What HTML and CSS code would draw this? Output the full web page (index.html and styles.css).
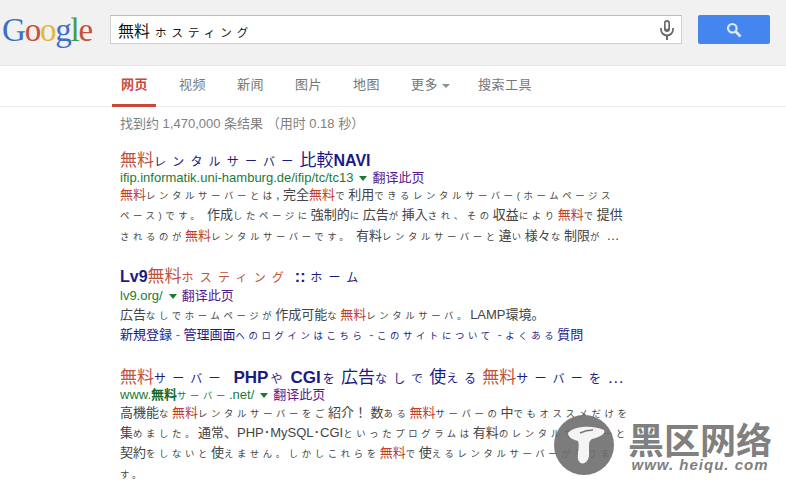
FILE: index.html
```html
<!DOCTYPE html>
<html lang="ja">
<head>
    <meta charset="UTF-8">
    <meta name="viewport" content="width=device-width, initial-scale=1.0">
    <title>無料ホスティング</title>
    <link rel="stylesheet" href="styles.css">
</head>
<body>
    <header class="top">
        <div class="logo"><span class="blue">G</span><span class="red">o</span><span class="yellow">o</span><span class="blue">g</span><span class="green">l</span><span class="red">e</span></div>
        <div class="search">
            <div class="query">無料<span class="k">ホスティング</span></div>
            <svg class="mic" width="14" height="20" viewBox="0 0 14 20"><rect x="4" y="0" width="6" height="12" rx="3" fill="#6a6a6a"/><rect x="5.7" y="2" width="2.6" height="7" rx="1.3" fill="#fff"/><path d="M1 8v1.5a6 6 0 0 0 12 0V8" fill="none" stroke="#6a6a6a" stroke-width="1.8"/><rect x="6" y="15" width="2" height="5" fill="#6a6a6a"/></svg>
        </div>
        <div class="go">
            <svg width="16" height="16" viewBox="0 0 16 16"><circle cx="6.3" cy="6.3" r="4.3" fill="none" stroke="#dfeafd" stroke-width="2.2"/><path d="M9.6 9.6L14.5 14.5" stroke="#dfeafd" stroke-width="2.8"/></svg>
        </div>
    </header>

    <nav class="tabs">
        <a class="tab active">网页</a>
        <a class="tab">视频</a>
        <a class="tab">新闻</a>
        <a class="tab">图片</a>
        <a class="tab">地图</a>
        <a class="tab more">更多<i class="caret"></i></a>
        <a class="tab tools">搜索工具</a>
    </nav>

    <main class="main">
        <div class="stats">找到约 1,470,000 条结果 （用时 0.18 秒）</div>

        <section class="result first">
            <h3><em>無料</em><span class="k">レンタルサーバー</span>比較<b>NAVI</b></h3>
            <div class="url">ifip.informatik.uni-hamburg.de/ifip/tc/tc13<i class="arrow"></i><a>翻译此页</a></div>
            <p><em>無料</em><span class="k">レンタルサーバーとは</span>, 完全<em>無料</em><span class="k">で</span>利用<span class="k">できるレンタルサーバー(ホームページス</span></p>
            <p><span class="k">ペース)です。</span> 作成<span class="k">したページに</span>強制的<span class="k">に</span>広告<span class="k">が</span>挿入<span class="k">され、その</span>収益<span class="k">により</span><em>無料</em><span class="k">で</span>提供</p>
            <p><span class="k">されるのが</span><em>無料</em><span class="k">レンタルサーバーです。</span> 有料<span class="k">レンタルサーバーと</span>違<span class="k">い</span>様々<span class="k">な</span>制限<span class="k">が</span> …</p>
        </section>

        <section class="result second">
            <h3><b>Lv9</b><em>無料</em><em class="k">ホスティング</em> <b>::</b> <span class="k">ホーム</span></h3>
            <div class="url">lv9.org/<i class="arrow"></i><a>翻译此页</a></div>
            <p>広告<span class="k">なしでホームページが</span>作成可能<span class="k">な</span><em>無料</em><span class="k">レンタルサーバ。</span>LAMP環境。</p>
            <p class="links"><a>新規登録</a> - <a>管理画面<span class="k">へのログインはこちら</span></a> - <a><span class="k">このサイトについて</span></a> - <a><span class="k">よくある</span>質問</a></p>
        </section>

        <section class="result third">
            <h3><em>無料</em><span class="k">サーバー</span> <b>PHP</b><span class="k">や</span><b>CGI</b><span class="k">を</span>広告<span class="k">なしで</span>使<span class="k">える</span><em>無料</em><span class="k">サーバーを</span>…</h3>
            <div class="url">www.<strong>無料</strong><span class="k">サーバー</span>.net/<i class="arrow"></i><a>翻译此页</a></div>
            <p>高機能<span class="k">な</span><em>無料</em><span class="k">レンタルサーバーをご</span>紹介！ 数<span class="k">ある</span><em>無料</em><span class="k">サーバーの</span>中<span class="k">でもオススメだけを</span></p>
            <p>集<span class="k">めました。</span>通常、PHP･MySQL･CGI<span class="k">といったプログラムは</span>有料<span class="k">のレンタルサーバーと</span></p>
            <p>契約<span class="k">をしないと</span>使<span class="k">えません。しかしこれらを</span><em>無料</em><span class="k">で</span>使<span class="k">えるレンタルサーバーがありま</span></p>
            <p><span class="k">す。</span></p>
        </section>
    </main>

    <div class="mark">
        <svg class="shroom" width="60" height="60" viewBox="0 0 60 60"><circle cx="30" cy="30" r="30" fill="#6e6e6e" fill-opacity=".9"/><path d="M14 18C18 12 36 9 50 15C52 19 46 22 38 24C36 25 35 27 35 31C35 38 36 42 33 46C30 50 25 49 24 44C23 38 26 32 24 26C20 25 14 23 14 18z" fill="#f4f4f4"/><path d="M26 18Q32 15 39 15" fill="none" stroke="#777" stroke-width="1.5"/></svg>
        <div class="brand">
            <div class="brand-cn">黑区网络</div>
            <div class="brand-en">www. heiqu. com</div>
        </div>
    </div>
</body>
</html>
```

FILE: styles.css
```css
html, body {
    margin: 0;
    padding: 0;
}
body {
    width: 786px;
    height: 480px;
    overflow: hidden;
    position: relative;
    background: #fff;
    font-family: "Liberation Sans", "Noto Sans CJK JP", sans-serif;
    color: #333;
}
a {
    text-decoration: none;
}

/* kana renders small and widely spaced in the shot */
.k {
    font-size: 0.72em;
    letter-spacing: 0.39em;
}

.top {
    height: 65px;
    display: flex;
    align-items: flex-start;
    background: #f1f1f1;
    border-bottom: 1px solid #e5e5e5;
}
.logo {
    width: 108px;
    padding-left: 2px;
    box-sizing: border-box;
    font-family: "Liberation Serif", serif;
    font-size: 33px;
    line-height: 60px;
    letter-spacing: -1.2px;
}
.blue { color: #3f6fc4; }
.red { color: #c8503c; }
.yellow { color: #e0b93a; }
.green { color: #45994f; }

.search {
    margin: 15px 0 0 2px;
    width: 572px;
    height: 29px;
    box-sizing: border-box;
    display: flex;
    align-items: center;
    justify-content: space-between;
    padding: 0 7px 0 7px;
    background: #fff;
    border: 1px solid #d0d0d0;
    border-top-color: #bdbdbd;
}
.query {
    font-size: 16px;
    color: #111;
}
.query .k {
    margin-left: 5px;
    font-size: 11.5px;
    letter-spacing: 5px;
}
.mic {
    margin-top: 1px;
}
.go {
    margin: 15px 0 0 16px;
    width: 72px;
    height: 29px;
    display: flex;
    align-items: center;
    justify-content: center;
    background: #4585f0;
    border-radius: 2px;
}

.tabs {
    height: 40px;
    display: flex;
    padding-left: 112px;
    border-bottom: 1px solid #ebebeb;
    font-size: 13px;
    letter-spacing: 0.5px;
}
.tab {
    box-sizing: border-box;
    width: 44px;
    margin-right: 14px;
    padding: 8px 0 0 1px;
    text-align: center;
    color: #777;
    white-space: nowrap;
}
.tab.active {
    height: 41px;
    color: #c9483b;
    font-weight: bold;
    border-bottom: 3px solid #c9483b;
}
.tab.more {
    margin-right: 28px;
    text-align: left;
    padding-left: 9px;
}
.tab.tools {
    width: 60px;
    padding-left: 4px;
    text-align: left;
}
.caret {
    display: inline-block;
    margin-left: 4px;
    vertical-align: middle;
    border-top: 4px solid #909090;
    border-left: 4px solid transparent;
    border-right: 4px solid transparent;
}

.main {
    padding-left: 120px;
}
.stats {
    padding-top: 8px;
    height: 24px;
    font-size: 13px;
    line-height: 17px;
    color: #808080;
}

.result {
    white-space: nowrap;
}
.result.first {
    margin-top: 13px;
}
.result.second {
    margin-top: 21px;
}
.result.third {
    margin-top: 23px;
}
.result h3 {
    margin: 0;
    font-size: 17px;
    font-weight: normal;
    color: #1a1a86;
}
.result.first h3 {
    height: 17px;
    line-height: 18px;
}
.result.second h3 {
    height: 20px;
    line-height: 20px;
}
.result.third h3 {
    height: 18px;
    line-height: 19px;
}
.result h3 .k {
    font-size: 12px;
    letter-spacing: 6.2px;
}
.result h3 em {
    font-style: normal;
    color: #c0533f;
}
.result h3 b {
    font-size: 16px;
    font-weight: bold;
}
.result.third h3 b {
    font-size: 17px;
    margin: 0 2px;
}
.url {
    height: 18px;
    font-size: 13px;
    line-height: 18px;
    color: #1c7a35;
}
.first .url {
    height: 16px;
}
.third .url {
    height: 17px;
}
.url strong {
    color: #0e6b2a;
}
.url a {
    color: #551a8b;
}
.arrow {
    display: inline-block;
    margin: 0 5px 0 6px;
    vertical-align: middle;
    border-top: 5px solid #1c7a35;
    border-left: 4px solid transparent;
    border-right: 4px solid transparent;
}
.result p {
    margin: 0;
    height: 20.3px;
    font-size: 13px;
    line-height: 20px;
    color: #444;
}
.second p {
    height: 20px;
}
.result p em {
    font-style: normal;
    color: #c0402e;
}
.result .links {
    color: #666;
}
.links a {
    color: #1a1a86;
}

/* site watermark sits over the page */
.mark {
    position: absolute;
    left: 554px;
    top: 415px;
    display: flex;
    gap: 14px;
}
.brand {
    color: #808080;
    text-align: center;
    white-space: nowrap;
}
.brand-cn {
    margin-top: 3px;
    font-size: 36px;
    line-height: 40px;
    font-weight: bold;
    font-family: "Noto Sans CJK SC", sans-serif;
}
.brand-en {
    font-size: 15px;
    line-height: 14px;
    font-style: italic;
    font-weight: bold;
    letter-spacing: 1px;
}
```
